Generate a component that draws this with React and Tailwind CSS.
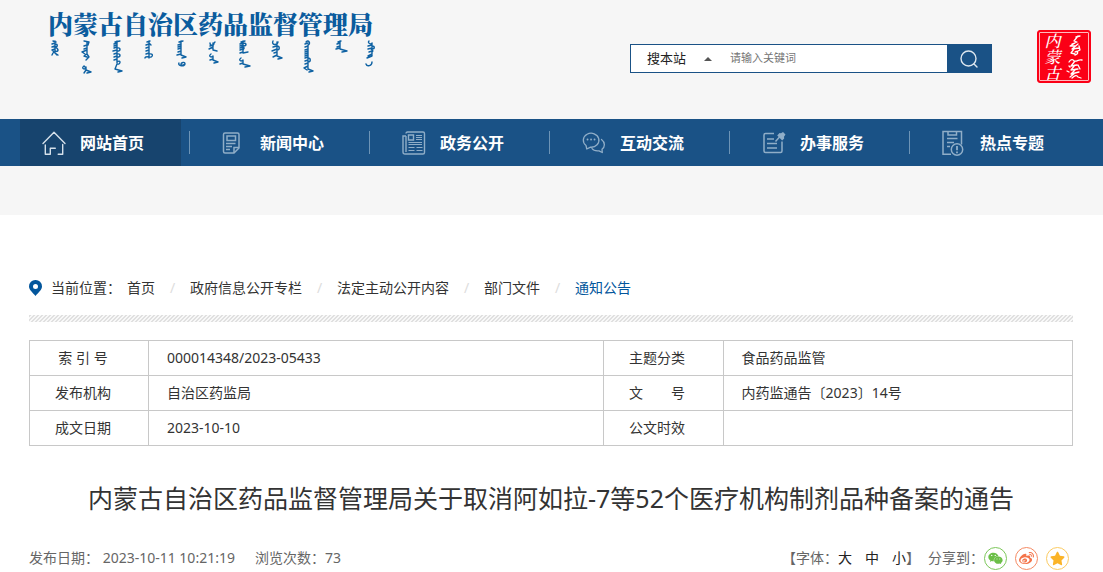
import { FaWeixin, FaWeibo, FaStar } from "react-icons/fa";

const navItems = [
    { label: "网站首页", icon: HomeIcon, active: true },
    { label: "新闻中心", icon: NewsIcon },
    { label: "政务公开", icon: PaperIcon },
    { label: "互动交流", icon: ChatIcon },
    { label: "办事服务", icon: ServiceIcon },
    { label: "热点专题", icon: TopicIcon },
];

const crumbs = [
    "首页",
    "政府信息公开专栏",
    "法定主动公开内容",
    "部门文件",
    "通知公告",
];

const rows = [
    ["索 引 号", "000014348/2023-05433", "主题分类", "食品药品监管"],
    ["发布机构", "自治区药监局", "文　　号", "内药监通告〔2023〕14号"],
    ["成文日期", "2023-10-10", "公文时效", ""],
];

const shares = [
    { label: "微信", icon: FaWeixin, color: "border-[#7cc75a] text-[#6bbf47]" },
    { label: "微博", icon: FaWeibo, color: "border-[#f58a63] text-[#f4744a]" },
    { label: "QQ空间", icon: FaStar, color: "border-[#fbcb62] text-[#fbb428]" },
];

function HomeIcon() {
    return (
        <svg
            viewBox="0 0 24 24"
            className="size-6 text-[#d5e0ea]"
            fill="none"
            stroke="currentColor"
            strokeWidth="1.4"
            strokeLinecap="round"
            strokeLinejoin="round"
        >
            <path d="M1 12.500 12 1.300l11 11.200M3.300 14v9.300h5v-6h5M20.700 13.500v9.800h-4.500" />
        </svg>
    );
}

function NewsIcon() {
    return (
        <svg
            viewBox="0 0 24 24"
            className="size-6 text-[#90aec8]"
            fill="none"
            stroke="currentColor"
            strokeWidth="1.5"
        >
            <path d="M3 2h12.500q1.500 0 1.500 1.500V17l-5 5H3q-1.500 0-1.500-1.500v-17Q1.500 2 3 2z" />
            <path d="M17 16.500h-5V22M5 5h8.500v4.500H5zM4 12.500h9.500M4 15.500h6M4 18.500h4" />
        </svg>
    );
}

function PaperIcon() {
    return (
        <svg
            viewBox="0 0 24 24"
            className="size-6 text-[#90aec8]"
            fill="none"
            stroke="currentColor"
            strokeWidth="1.4"
        >
            <path d="M4 2.500q0-1.500 1.500-1.500h15.500q1.500 0 1.500 1.500v19q0 1.500-1.500 1.500H3q-2 0-2-2V5h3M4 5v16" />
            <path d="M6.500 4h5v5h-5z" />
            <path
                strokeWidth="1"
                d="M14 4.500h6M14 6.500h6M14 8.500h6M6.500 11.500h13.500M6.500 13.500h13.500M6.500 16.500h6M14.500 16.500h6M6.500 19.500h6M14.500 19.500h6"
            />
        </svg>
    );
}

function ChatIcon() {
    return (
        <svg
            viewBox="0 0 24 24"
            className="size-6 text-[#90aec8]"
            fill="none"
            stroke="currentColor"
            strokeWidth="1.3"
            strokeLinecap="round"
            strokeLinejoin="round"
        >
            <path d="M4 14.500a7.800 7 0 1 1 4.500 1.700L4.800 18z" />
            <path d="M19.500 8.500c4 3 3.500 7.500.5 9.800l.3 3.200-3.300-1.700c-3 .3-6-.8-7-2.300" />
            <path strokeWidth="1.800" d="M5.500 8.500h.1M9 8.500h.1M12.500 8.500h.1" />
        </svg>
    );
}

function ServiceIcon() {
    return (
        <svg
            viewBox="0 0 24 24"
            className="size-6 text-[#90aec8]"
            fill="none"
            stroke="currentColor"
            strokeWidth="1.500"
        >
            <path d="M12 2.500H3.500Q2 2.500 2 4v16q0 1.500 1.500 1.500h15q1.500 0 1.500-1.500v-9.500" />
            <path d="M5 8h7M5 12.500h10M5 17h10M13.500 10.500l4-4.500" />
            <path
                fill="currentColor"
                stroke="none"
                d="m17.500 2 1.500.3L21 1l2.500 2.500-1.500 2.200.2 1.800-2 2-5-5z"
            />
        </svg>
    );
}

function TopicIcon() {
    return (
        <svg
            viewBox="0 0 24 26"
            className="h-[26px] w-6 text-[#90aec8]"
            fill="none"
            stroke="currentColor"
            strokeWidth="1.500"
        >
            <path d="M9 24.200H1V1.500h18.500v13M6 1.500V5h8.500V1.500M5 8.500h10.500M5 12.500h7M5 16.500h3" />
            <circle cx="15" cy="19.500" r="5.700" />
            <path strokeWidth="1.800" d="M15 16v4.300M15 21.500v1.700" />
        </svg>
    );
}

// decorative vertical script hanging under the site name
function MongolianLine() {
    return (
        <svg
            viewBox="0 0 330 38"
            className="h-[38px] w-[330px]"
            fill="none"
            stroke="#0f62a3"
            strokeWidth="1.400"
            strokeLinecap="round"
            strokeLinejoin="round"
            aria-hidden="true"
        >
            <path d="M5 3l3 1M7 3v12l3 2M7 5l-3 1M7 8l-3 1M7 11l-3 1M7 6c3 0 3 3 0 3s3 0 3 3-4 0-5 3l-1 2M5 13l4 4" />
            <path d="M36 3l5 1-1 3M39 4v12l2 3-3 3M39 7l-3 1M39 10l-3 1M39 12l-5 2 3 2M39 16l-3 2 3 1M36 28c-3 2 0 4 2 2l-2-2M38 29v3l5 2-4 1M38 32l-2 3" />
            <path d="M67 4l5-1M69 3v22M69 5l-3 1M69 7l-3 1M69 9l-3 1M69 12l-4 1M69 15l-3 1M69 18l-3 1M69 21l-3 1M69 10c4-1 4 3 0 3M69 16c4-1 4 3 0 3M69 24c4-3 4 3 0 2l-2 5 7 2-4 1" />
            <path d="M99 4l3-1M101 3v17M101 6l-3 1M101 9l-3 1M101 12l-3 1M101 15l-3 1M101 16c5-1 4 4 0 3s-4 1-4 1M101 5l2 2" />
            <path d="M131 4l4-1M133 3v14l5 2-4 1M133 6l-3 1M133 8l-3 1M133 10l-3 1M133 13l-3 1M133 16l-4 1M131 25c-2 3 6 4 6 1s-4-1-4 0 1 2 4 0" />
            <path d="M162 5c0 3 4 3 4 0l1-1M165 5v7l4 1M165 7l-3 1M165 9l-4 2M163 16c-3 2 0 4 2 2v4l5 2-4 1M165 21l-3 1" />
            <path d="M193 4l4-1M195 3v12l5-1M195 5l-3 1M195 7l-3 1M195 9l-3 1M195 11l-3 1M195 14l-3 1M195 5c4 0 4 3 0 3s4 0 0 4M193 20c-3 2 0 4 2 2v4l7 2-5 1M195 25l-3 1" />
            <path d="M225 3c-2 4 4 5 5 1M229 4v14l5 2-4 1M229 8l-4 1M229 11l-5 2M229 14l-3 1M229 17l-4 2M229 8c3 0 3 4 0 4" />
            <path d="M258 4c3-3 5 2 2 3v24l5 2-4 1M260 5l-3 1M260 8l-3 1M260 11l-3 1M260 13l-3 1M260 15l-3 1M260 17l-3 1M260 19l-3 1M260 22l-3 1M260 25l-3 1M260 28l-4 2M256 30l3 2M260 20c3 0 3 4 0 4" />
            <path d="M290 4l3-1M292 3v8l7 2-5 1M292 5l-3 1M292 8l-3 1M292 10l-4 1" />
            <path d="M321 3c-2 2 2 4 3 2v13M324 7l-4 1M324 10l-4 1M324 13l-3 1M324 16l-4 2M324 18l-5 2M324 8c3 0 3 3 0 3s3 1 0 3M318 26c1 3 6 2 6-2" />
        </svg>
    );
}

function Seal() {
    return (
        <div className="flex h-[53px] w-[54px] items-center justify-around rounded-[3px] border border-[#fb0016] bg-[#fb0016] px-1 text-white outline-1 -outline-offset-3 outline-[#ffb9be]">
            <div className="w-4 text-center font-['Noto_Serif_CJK_SC','Noto_Sans_CJK_SC',serif] text-base leading-4 font-medium italic">
                内蒙古
            </div>
            <svg
                viewBox="0 0 18 48"
                className="h-12 w-[18px]"
                fill="none"
                stroke="currentColor"
                strokeWidth="1.300"
                strokeLinecap="round"
                strokeLinejoin="round"
                aria-hidden="true"
            >
                <path d="M14 3l-4 1M12 3 8 8l3 1-5 2M9 10l-5 3 5 0M12 11l-6 5 7-1M8 16l-3 4 4 1M13 13l1 4-4 2M9 19c3-2 4 2 0 3" />
                <path d="M3 29c2-3 4-3 5-1 3 1 4-2 8-1M9 28l-4 5 6-1M9 32l-4 5 7-1M3 33l1 1M1 38l2 1M10 36l-5 5 8-2M12 32l2 4M9 40l-5 4M6 45c3-3 5-3 6-1l3 1" />
            </svg>
        </div>
    );
}

function SearchBox() {
    return (
        <form
            className="flex h-[29px] w-[362px] border border-[#1a5286] bg-white"
            onSubmit={(event) => event.preventDefault()}
        >
            <label className="flex items-center pl-4">
                <select
                    aria-label="搜索范围"
                    className="w-[57px] appearance-none text-[13px] text-[#222] focus:outline-none"
                >
                    <option>搜本站</option>
                </select>
                <svg
                    viewBox="0 0 8 4"
                    className="h-1 w-2"
                    fill="#555"
                    aria-hidden="true"
                >
                    <path d="M0 4 4 0l4 4z" />
                </svg>
            </label>
            <input
                type="text"
                aria-label="关键词"
                placeholder="请输入关键词"
                className="ml-[18px] min-w-0 flex-1 text-[11px] placeholder:text-[#757575] focus:outline-none"
            />
            <button
                aria-label="搜索"
                className="flex w-11 items-center justify-center bg-[#1a5286]"
            >
                <svg
                    viewBox="0 0 18 18"
                    className="size-[18px]"
                    fill="none"
                    stroke="#dde7ef"
                    strokeWidth="1.400"
                    strokeLinecap="round"
                >
                    <circle cx="8.500" cy="8.500" r="7.500" />
                    <path d="m14 14 3 3" />
                </svg>
            </button>
        </form>
    );
}

function InfoTable() {
    return (
        <table className="mt-[18px] w-full table-fixed border-collapse text-sm">
            <colgroup>
                <col className="w-[119px]" />
                <col />
                <col className="w-[120px]" />
                <col className="w-[33.5%]" />
            </colgroup>
            <tbody>
                {rows.map((row) => (
                    <tr key={row[0]} className="h-[35px]">
                        {row.map((cell, idx) =>
                            idx % 2 === 0 ? (
                                <th
                                    key={idx}
                                    scope="row"
                                    className="border border-[#c8c8c8] pr-3 font-normal"
                                >
                                    {cell}
                                </th>
                            ) : (
                                <td
                                    key={idx}
                                    className="border border-[#c8c8c8] pl-[18px]"
                                >
                                    {cell}
                                </td>
                            )
                        )}
                    </tr>
                ))}
            </tbody>
        </table>
    );
}

export default function App() {
    return (
        <div className="min-h-screen bg-white font-['Noto_Sans','Noto_Sans_CJK_SC',sans-serif] text-[#333]">
            <header className="bg-[#f6f6f6] pb-[49px]">
                <div className="flex h-[119px] justify-between pr-3 pl-12">
                    <div className="pt-2">
                        <div className="h-[30px] font-['Noto_Serif_CJK_SC','Noto_Sans_CJK_SC',serif] text-[25px] leading-[30px] font-black text-[#0a5c9e]">
                            内蒙古自治区药品监督管理局
                        </div>
                        <MongolianLine />
                    </div>
                    <div className="flex gap-[45px]">
                        <div className="pt-11">
                            <SearchBox />
                        </div>
                        <div className="pt-[30px]">
                            <Seal />
                        </div>
                    </div>
                </div>
                <nav className="bg-[#1a5286] pl-5">
                    <ul className="flex h-[47px]">
                        {navItems.map((item, idx) => (
                            <li
                                key={item.label}
                                className="flex w-[180px] items-center gap-2"
                            >
                                <a
                                    href="#"
                                    className={`flex h-full w-[161px] items-center pl-[22px] text-base font-bold text-white ${
                                        item.active ? "bg-[#17446e]" : ""
                                    }`}
                                >
                                    <span className="w-[38px]">
                                        <item.icon />
                                    </span>
                                    {item.label}
                                </a>
                                {idx < navItems.length - 1 ? (
                                    <span className="h-[23px] w-px bg-[#6d94b6]"></span>
                                ) : null}
                            </li>
                        ))}
                    </ul>
                </nav>
            </header>

            <main className="pt-[61px] pr-[30px] pl-[29px]">
                <div className="flex h-6 items-center text-sm">
                    <svg
                        viewBox="0 0 13 16"
                        className="mr-[9px] h-4 w-[13px]"
                        fill="#03569c"
                        aria-hidden="true"
                    >
                        <path
                            fillRule="evenodd"
                            d="M6.500 0A6.400 6.400 0 0 0 0 6.400C0 10 4 12.500 6.500 16 9 12.500 13 10 13 6.400A6.400 6.400 0 0 0 6.500 0zm0 4a2.500 2.500 0 1 1 0 5 2.500 2.500 0 0 1 0-5z"
                        />
                    </svg>
                    <span className="w-[76px]">当前位置：</span>
                    {crumbs.map((crumb, idx) => (
                        <span key={crumb} className="flex">
                            {idx > 0 ? (
                                <span className="w-[35px] text-center text-[#ddd]">
                                    /
                                </span>
                            ) : null}
                            <a
                                href="#"
                                className={
                                    idx === crumbs.length - 1
                                        ? "text-[#03569c]"
                                        : ""
                                }
                            >
                                {crumb}
                            </a>
                        </span>
                    ))}
                </div>
                <div className="mt-[15px] h-[7px] bg-[linear-gradient(135deg,#e0e0e0_25%,#f8f8f8_25%,#f8f8f8_50%,#e0e0e0_50%,#e0e0e0_75%,#f8f8f8_75%)] bg-[size:4px_4px]"></div>
                <InfoTable />
                <h1 className="mt-8 text-center text-[25px] leading-10">
                    内蒙古自治区药品监督管理局关于取消阿如拉-7等52个医疗机构制剂品种备案的通告
                </h1>
                <div className="mt-7 flex h-6 items-center justify-between text-sm text-[#666]">
                    <div className="flex gap-5">
                        <span>发布日期： 2023-10-11 10:21:19</span>
                        <span>浏览次数：73</span>
                    </div>
                    <div className="flex items-center">
                        <span>【字体：</span>
                        <span className="flex gap-[13px] text-[#222]">
                            <button>大</button>
                            <button>中</button>
                            <button>小</button>
                        </span>
                        <span>】</span>
                        <span className="ml-2">分享到：</span>
                        <span className="mr-1 flex gap-2">
                            {shares.map((share) => (
                                <button
                                    key={share.label}
                                    aria-label={share.label}
                                    className={`flex size-[23px] items-center justify-center rounded-full border ${share.color}`}
                                >
                                    <share.icon className="size-[15px]" />
                                </button>
                            ))}
                        </span>
                    </div>
                </div>
            </main>
        </div>
    );
}
